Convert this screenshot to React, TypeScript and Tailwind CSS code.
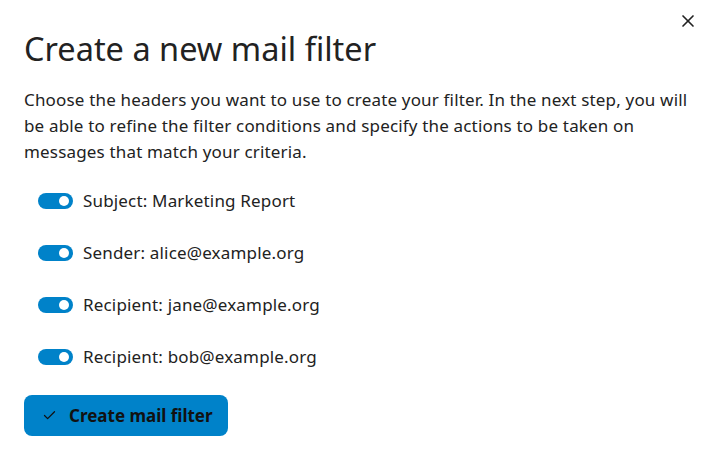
import { Check, X } from 'lucide-react';

const headers = [
  'Subject: Marketing Report',
  'Sender: alice@example.org',
  'Recipient: jane@example.org',
  'Recipient: bob@example.org',
];

const Toggle = () => (
  <span className="relative inline-flex h-[16px] w-[35px] shrink-0 items-center rounded-full bg-[#0082c9]">
    <span className="absolute right-[4px] h-[10px] w-[10px] rounded-full bg-white" />
  </span>
);

const App = () => {
  return (
    <div className="relative h-[460px] w-[708px] bg-white px-6 pt-[29px] font-['Noto_Sans',sans-serif] text-[#222222]">
      <button className="absolute right-[10px] top-[11px] flex h-[20px] w-[20px] items-center justify-center text-[#222222]">
        <X size={20} strokeWidth={2} />
      </button>

      <h2 className="text-[32.5px] leading-[40px] font-normal">Create a new mail filter</h2>

      <p className="mt-[18px] whitespace-nowrap text-[17px] leading-[26px] tracking-[0.01em]">
        Choose the headers you want to use to create your filter. In the next step, you will
        <br />
        be able to refine the filter conditions and specify the actions to be taken on
        <br />
        messages that match your criteria.
      </p>

      <div className="mt-[10px] flex flex-col">
        {headers.map((h) => (
          <label key={h} className="flex h-[52px] items-center gap-[10px] pl-[14px] text-[17px] tracking-[0.01em]">
            <Toggle />
            <span>{h}</span>
          </label>
        ))}
      </div>

      <button className="mt-[12px] flex h-[41px] items-center gap-[12px] rounded-[8px] bg-[#0082c9] pl-[18px] pr-[15px] text-[17px] font-bold text-[#111111]">
        <Check size={15} strokeWidth={2} />
        Create mail filter
      </button>
    </div>
  );
};

export default App;
